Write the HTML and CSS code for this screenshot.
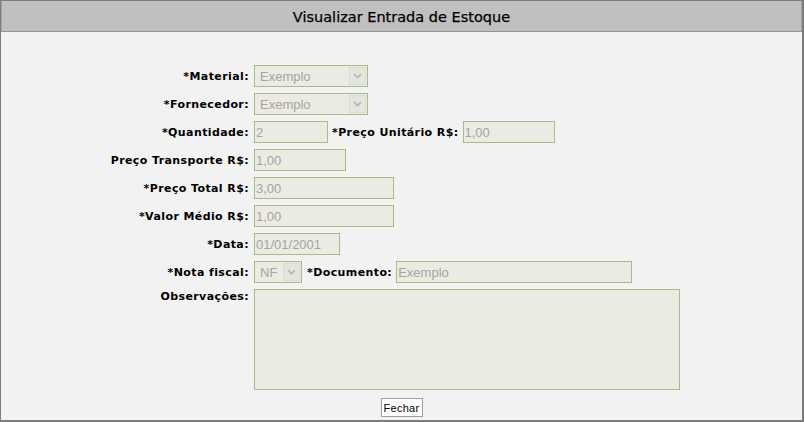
FILE: index.html
```html
<!DOCTYPE html>
<html lang="pt-BR">
<head>
    <meta charset="UTF-8">
    <title>Visualizar Entrada de Estoque</title>
    <link rel="stylesheet" href="styles.css">
</head>
<body>

<div class="janela">
    <div class="titulo">Visualizar Entrada de Estoque</div>

    <div class="formulario">
        <label class="rotulo">*Material:</label>
        <div class="campo">
            <span class="combo w114">
                <select disabled><option>Exemplo</option></select>
                <span class="seta"><svg width="9" height="6" viewBox="0 0 9 6"><path d="M1 1 L4.5 4.5 L8 1" fill="none" stroke="#b4b4ac" stroke-width="1.6"/></svg></span>
            </span>
        </div>

        <label class="rotulo">*Fornecedor:</label>
        <div class="campo">
            <span class="combo w114">
                <select disabled><option>Exemplo</option></select>
                <span class="seta"><svg width="9" height="6" viewBox="0 0 9 6"><path d="M1 1 L4.5 4.5 L8 1" fill="none" stroke="#b4b4ac" stroke-width="1.6"/></svg></span>
            </span>
        </div>

        <label class="rotulo">*Quantidade:</label>
        <div class="campo">
            <input type="text" class="w74" value="2" readonly>
            <label class="rotulo extra">*Preço Unitário R$:</label>
            <input type="text" class="w92" value="1,00" readonly>
        </div>

        <label class="rotulo">Preço Transporte R$:</label>
        <div class="campo"><input type="text" class="w92" value="1,00" readonly></div>

        <label class="rotulo">*Preço Total R$:</label>
        <div class="campo"><input type="text" class="w140" value="3,00" readonly></div>

        <label class="rotulo">*Valor Médio R$:</label>
        <div class="campo"><input type="text" class="w140" value="1,00" readonly></div>

        <label class="rotulo">*Data:</label>
        <div class="campo"><input type="text" class="w86" value="01/01/2001" readonly></div>

        <label class="rotulo">*Nota fiscal:</label>
        <div class="campo">
            <span class="combo w48">
                <select disabled><option>NF</option></select>
                <span class="seta"><svg width="9" height="6" viewBox="0 0 9 6"><path d="M1 1 L4.5 4.5 L8 1" fill="none" stroke="#b4b4ac" stroke-width="1.6"/></svg></span>
            </span>
            <label class="rotulo extra doc">*Documento:</label>
            <input type="text" class="w236" value="Exemplo" readonly>
        </div>

        <label class="rotulo topo">Observações:</label>
        <div class="campo area"><textarea readonly></textarea></div>
    </div>

    <div class="botoes">
        <button type="button">Fechar</button>
    </div>
</div>

</body>
</html>
```

FILE: styles.css
```css
html, body {
    margin: 0;
    padding: 0;
}

body {
    background-color: #f2f2f2;
}

.janela {
    width: 804px;
    height: 422px;
    box-sizing: border-box;
    border-style: solid;
    border-color: #7c7c7c;
    border-width: 1px 2px 2px 1px;
    background-color: #f2f2f2;
}

.titulo {
    height: 30px;
    line-height: 32px;
    background-color: #c0c0c0;
    border-left: 1px solid #a4a4a4;
    border-right: 1px solid #a4a4a4;
    border-bottom: 1px solid #949494;
    text-align: center;
    font-family: "DejaVu Sans", Verdana, sans-serif;
    font-size: 14.5px;
    -webkit-text-stroke: 0.25px #000;
    color: #000;
}

.formulario {
    display: grid;
    grid-template-columns: 248px auto;
    grid-template-rows: repeat(8, 22px) 101px;
    column-gap: 5px;
    row-gap: 6px;
    padding-top: 33px;
}

.rotulo {
    font-family: "DejaVu Sans", Verdana, sans-serif;
    font-weight: bold;
    font-size: 11px;
    letter-spacing: 0.4px;
    color: #000;
    text-align: right;
    align-self: center;
    white-space: nowrap;
}

.rotulo.topo {
    align-self: start;
    padding-top: 1px;
}

.rotulo.doc {
    margin-left: 1px;
}

.campo {
    display: flex;
    align-items: center;
    gap: 4px;
}

.campo.area {
    align-items: flex-start;
}

input, textarea, .combo {
    box-sizing: border-box;
    border: 1px solid #a4be87;
    background-color: #ebeae3;
    color: #a6a69e;
    font-family: "Liberation Sans", Arial, sans-serif;
    font-size: 13px;
    margin: 0;
}

input {
    height: 22px;
    padding: 0 1px;
    outline: none;
}

textarea {
    width: 426px;
    height: 101px;
    resize: none;
    padding: 2px;
}

.combo {
    display: flex;
    align-items: center;
    height: 22px;
}

.combo select {
    appearance: none;
    -webkit-appearance: none;
    border: none;
    background: transparent;
    color: #a6a69e;
    font-family: "Liberation Sans", Arial, sans-serif;
    font-size: 13px;
    flex: 1;
    min-width: 0;
    padding: 0 0 0 5px;
    margin: 0;
    opacity: 1;
}

.seta {
    box-sizing: border-box;
    width: 17px;
    height: 18px;
    margin-right: 1px;
    border: 1px solid #dcdcd5;
    background-color: #e5e5df;
    display: flex;
    align-items: center;
    justify-content: center;
}

.w48 { width: 48px; }
.w74 { width: 74px; }
.w86 { width: 86px; }
.w92 { width: 92px; }
.w114 { width: 114px; }
.w140 { width: 140px; }
.w236 { width: 236px; }

.botoes {
    display: flex;
    justify-content: center;
    padding-top: 8px;
}

.botoes button {
    box-sizing: border-box;
    width: 42px;
    height: 19px;
    padding: 0;
    background-color: #fff;
    border: 1px solid #a0a0a0;
    font-family: "Liberation Sans", Arial, sans-serif;
    font-size: 11px;
    letter-spacing: 0.3px;
    color: #000;
}
```
